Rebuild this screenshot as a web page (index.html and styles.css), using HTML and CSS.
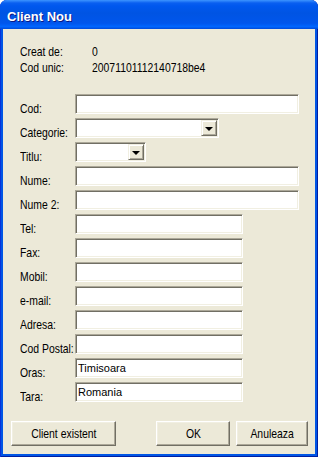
FILE: index.html
```html
<!DOCTYPE html>
<html lang="ro">

<head>
    <meta charset="UTF-8">
    <meta name="viewport" content="width=device-width, initial-scale=1.0">
    <title>Client Nou</title>
    <link rel="stylesheet" href="styles.css">
</head>

<body>
    <div class="window">
        <div class="titlebar">
            <span class="title">Client Nou</span>
        </div>

        <div class="client">
            <div class="info">
                <span class="txt">Creat de:</span><span class="txt">0</span>
                <span class="txt">Cod unic:</span><span class="txt">20071101112140718be4</span>
            </div>

            <div class="form">
                <label>Cod:</label>
                <input type="text" class="field long">

                <label>Categorie:</label>
                <div class="combo combo-cat"><span class="combo-btn"><i class="arrow"></i></span></div>

                <label>Titlu:</label>
                <div class="combo combo-small"><span class="combo-btn"><i class="arrow"></i></span></div>

                <label>Nume:</label>
                <input type="text" class="field long">

                <label>Nume 2:</label>
                <input type="text" class="field long">

                <label>Tel:</label>
                <input type="text" class="field">

                <label>Fax:</label>
                <input type="text" class="field">

                <label>Mobil:</label>
                <input type="text" class="field">

                <label>e-mail:</label>
                <input type="text" class="field">

                <label>Adresa:</label>
                <input type="text" class="field">

                <label>Cod Postal:</label>
                <input type="text" class="field">

                <label>Oras:</label>
                <input type="text" class="field" value="Timisoara">

                <label>Tara:</label>
                <input type="text" class="field" value="Romania">
            </div>

            <div class="buttons">
                <button class="btn btn-wide"><span>Client existent</span></button>
                <span class="spacer"></span>
                <button class="btn btn-ok"><span>OK</span></button>
                <button class="btn btn-cancel"><span>Anuleaza</span></button>
            </div>
        </div>
    </div>
</body>

</html>
```

FILE: styles.css
```css
body{
    margin: 0;
    background: #fff;
    font-family: "Liberation Sans", Arial, sans-serif;
    font-size: 13px;
    color: #000;
}

.window{
    width: 318px;
    height: 457px;
    box-sizing: border-box;
    display: flex;
    flex-direction: column;
    background: #0055e5;
    border-radius: 7px 7px 0 0;
    padding: 0 3px 3px 3px;
    box-shadow: inset 1px 0 0 #0831d9, inset -1px 0 0 #001ea0, inset 0 -1px 0 #001ea0;
}

.titlebar{
    height: 29px;
    margin: 0 -3px;
    border-radius: 7px 7px 0 0;
    background: linear-gradient(to bottom, #3d95ff 0, #0a5ff0 3px, #0058ee 6px, #0054e3 45%, #0056ec 80%, #0066ff 92%, #0049d8 100%);
    display: flex;
    align-items: center;
    padding-left: 7px;
    box-sizing: border-box;
}

.title{
    font-weight: bold;
    font-size: 13px;
    color: #fff;
    text-shadow: 1px 1px 0 #0a1883;
    margin-top: 3px;
}

.client{
    flex: 1;
    background: #ece9d8;
    padding: 15px 7px 0 8px;
    display: flex;
    flex-direction: column;
}

/* the dialog font is a narrow one, squeeze Liberation Sans to match */
.txt,
.form label,
.btn span{
    display: inline-block;
    white-space: nowrap;
    transform: scaleX(0.8);
    transform-origin: left center;
}

.info{
    display: grid;
    grid-template-columns: 72px auto;
    grid-auto-rows: 16px;
    line-height: 16px;
    margin-left: 9px;
}

.form{
    display: grid;
    grid-template-columns: 55px auto;
    grid-auto-rows: 20px;
    row-gap: 4px;
    margin-top: 18px;
    margin-left: 9px;
    justify-items: start;
}

.form label{
    line-height: 13px;
    padding-top: 8px;
}

.field{
    width: 168px;
    height: 20px;
    box-sizing: border-box;
    margin: 0;
    padding: 0 2px;
    font-family: inherit;
    font-size: 11px;
    background: #fff;
    border: 1px solid;
    border-color: #aca899 #fff #fff #aca899;
    box-shadow: inset 1px 1px 0 #716f64, inset -1px -1px 0 #f1efe2;
    outline: none;
}

.field.long{
    width: 224px;
}

.combo{
    height: 20px;
    box-sizing: border-box;
    background: #fff;
    border: 1px solid;
    border-color: #aca899 #fff #fff #aca899;
    box-shadow: inset 1px 1px 0 #716f64, inset -1px -1px 0 #f1efe2;
    display: flex;
    justify-content: flex-end;
    padding: 1px;
}

.combo-cat{
    width: 144px;
}

.combo-small{
    width: 71px;
}

.combo-btn{
    width: 16px;
    height: 16px;
    box-sizing: border-box;
    background: #ece9d8;
    border: 1px solid;
    border-color: #f1efe2 #716f64 #716f64 #f1efe2;
    box-shadow: inset 1px 1px 0 #fff, inset -1px -1px 0 #aca899;
    display: flex;
    align-items: center;
    justify-content: center;
}

.arrow{
    width: 0;
    height: 0;
    border-left: 4px solid transparent;
    border-right: 4px solid transparent;
    border-top: 4px solid #000;
    margin-top: 1px;
}

.buttons{
    display: flex;
    margin-top: 19px;
}

.spacer{
    flex: 1;
}

.btn{
    height: 25px;
    box-sizing: border-box;
    margin: 0;
    padding: 0;
    font-family: inherit;
    font-size: 13px;
    color: #000;
    background: #ece9d8;
    border: 1px solid;
    border-color: #fff #716f64 #716f64 #fff;
    box-shadow: inset -1px -1px 0 #aca899, inset 1px 1px 0 #f1efe2;
}

.btn span{
    transform-origin: center;
}

.btn-wide{
    width: 105px;
}

.btn-ok{
    width: 74px;
}

.btn-cancel{
    width: 72px;
    margin-left: 6px;
}
```
